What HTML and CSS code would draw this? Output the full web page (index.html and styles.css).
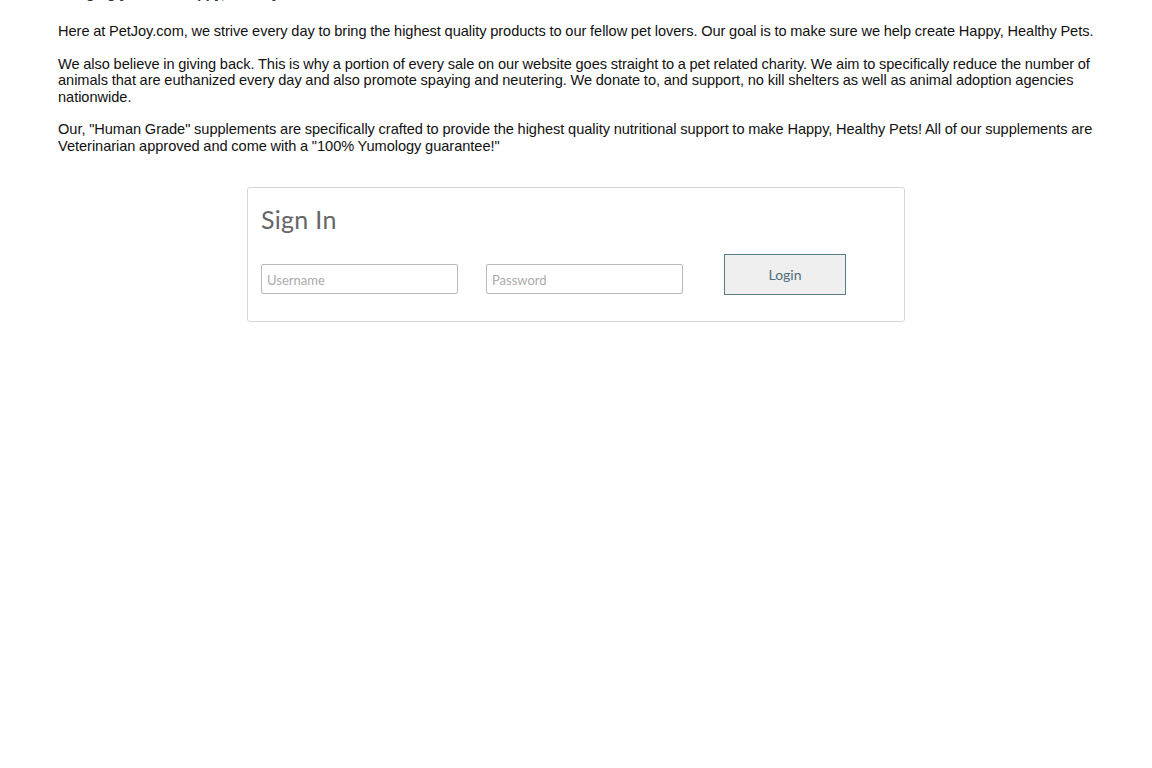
FILE: index.html
```html
<!DOCTYPE html>
<html lang="en">
<head>
<meta charset="utf-8">
<title>PetJoy - Sign In</title>
<link rel="stylesheet" href="styles.css">
</head>
<body>
<div class="page">
  <p class="cutline"><b>Bringing you</b> &nbsp; &nbsp; &nbsp; &nbsp; <b>Happy, Healthy Pets</b></p>
  <div class="about">
    <p>Here at PetJoy.com, we strive every day to bring the highest quality products to our fellow pet lovers. Our goal is to make sure we help create Happy, Healthy Pets.</p>
    <p>We also believe in giving back. This is why a portion of every sale on our website goes straight to a pet related charity. We aim to specifically reduce the number of animals that are euthanized every day and also promote spaying and neutering. We donate to, and support, no kill shelters as well as animal adoption agencies nationwide.</p>
    <p>Our, "Human Grade" supplements are specifically crafted to provide the highest quality nutritional support to make Happy, Healthy Pets! All of our supplements are Veterinarian approved and come with a "100% Yumology guarantee!"</p>
  </div>
  <div class="signin">
    <h2 class="signin-title">Sign In</h2>
    <form class="signin-row">
      <input class="field" type="text" placeholder="Username">
      <input class="field" type="password" placeholder="Password">
      <button class="login" type="button">Login</button>
    </form>
  </div>
</div>
</body>
</html>
```

FILE: styles.css
```css
html, body {
  margin: 0;
  padding: 0;
  background: #ffffff;
}
body {
  font-family: "Liberation Sans", Arial, sans-serif;
  color: #111;
  overflow: hidden;
}
.page {
  padding: 0 58px;
}
.cutline {
  margin: -15px 0 0 0;
  font-size: 14px;
  line-height: 17px;
  color: #333;
}
.about {
  margin: 21px -10px 0 0;
}
.about p {
  margin: 0 0 16px 0;
  font-size: 14.6px;
  letter-spacing: -0.04px;
  word-spacing: -0.3px;
  line-height: 16.5px;
  color: #111;
}
.signin {
  width: 658px;
  box-sizing: border-box;
  margin: 33px auto 0 auto;
  border: 1px solid #d6d6d6;
  border-radius: 3px;
  padding: 14px 13px 27px 13px;
}
.signin-title {
  margin: 0;
  font-family: "Lato", "Open Sans", sans-serif;
  font-weight: 400;
  font-size: 25px;
  line-height: 34px;
  color: #666;
  letter-spacing: 0.3px;
}
.signin-row {
  display: flex;
  align-items: flex-end;
  margin: 18px 0 0 0;
}
.field {
  width: 197px;
  height: 30px;
  box-sizing: border-box;
  border: 1px solid #b9b9b9;
  border-radius: 2px;
  padding: 2px 5px 0 5px;
  font-family: "Lato", "Open Sans", sans-serif;
  font-size: 13px;
  color: #333;
  background: #fff;
  margin: 0 28px 0 0;
}
.field::placeholder {
  color: #ababab;
}
.login {
  margin: 0 0 -1px 13px;
  width: 122px;
  height: 41px;
  box-sizing: border-box;
  background: #efefef;
  border: 1px solid #5b7b89;
  border-radius: 0;
  font-family: "Lato", "Open Sans", sans-serif;
  font-size: 14px;
  color: #4e6d7b;
  padding: 0;
}
```
